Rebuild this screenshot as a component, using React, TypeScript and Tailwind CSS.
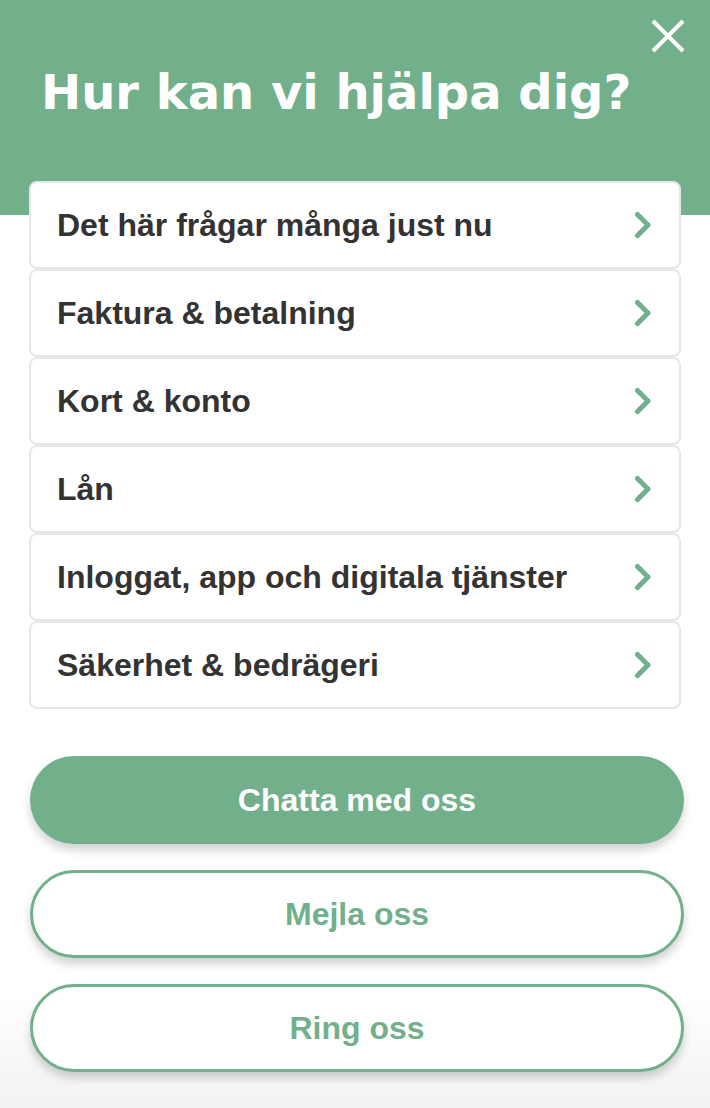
const topics = [
  "Det här frågar många just nu",
  "Faktura & betalning",
  "Kort & konto",
  "Lån",
  "Inloggat, app och digitala tjänster",
  "Säkerhet & bedrägeri",
];

function Chevron() {
  return (
    <svg width="18" height="28" viewBox="0 0 18 28" fill="none">
      <path
        d="M3.5 3.5L14 14L3.5 24.5"
        stroke="#72b08c"
        strokeWidth="5"
        strokeLinecap="round"
        strokeLinejoin="round"
      />
    </svg>
  );
}

export default function App() {
  return (
    <div className="relative min-h-[1108px] w-[710px] overflow-hidden bg-gradient-to-b from-white from-90% to-[#f2f2f2] font-['Liberation_Sans',Arial,sans-serif]">
      {/* header */}
      <div className="h-[215px] bg-[#72b08c] px-[41px] pt-[59px]">
        <h1 className="font-['DejaVu_Sans',Verdana,sans-serif] text-[48px] leading-[66px] font-bold text-white">
          Hur kan vi hjälpa dig?
        </h1>
      </div>
      <button className="absolute top-[16px] right-[22px] flex h-[40px] w-[40px] items-center justify-center">
        <svg width="36" height="36" viewBox="0 0 36 36" fill="none">
          <path d="M3 3L33 33M33 3L3 33" stroke="white" strokeWidth="4" />
        </svg>
      </button>

      <div className="-mt-[34px] px-[29px]">
        <ul className="flex flex-col">
          {topics.map((t) => (
            <li
              key={t}
              className="flex h-[88px] items-center justify-between rounded-[8px] border-2 border-[#e6e6e6] bg-white pr-[27px] pl-[26px]"
            >
              <span className="text-[32px] font-bold text-[#333333]">{t}</span>
              <Chevron />
            </li>
          ))}
        </ul>

        <div className="mt-[47px] flex flex-col gap-[26px] pl-[1px]">
          <button className="h-[88px] w-[654px] rounded-full bg-[#72b08c] text-[32px] font-bold text-white shadow-[0_6px_10px_rgba(0,0,0,0.18)]">
            Chatta med oss
          </button>
          <button className="h-[88px] w-[654px] rounded-full border-[3px] border-[#72b08c] bg-white text-[32px] font-bold text-[#72b08c] shadow-[0_6px_10px_rgba(0,0,0,0.18)]">
            Mejla oss
          </button>
          <button className="h-[88px] w-[654px] rounded-full border-[3px] border-[#72b08c] bg-white text-[32px] font-bold text-[#72b08c] shadow-[0_6px_10px_rgba(0,0,0,0.18)]">
            Ring oss
          </button>
        </div>
      </div>
    </div>
  );
}
